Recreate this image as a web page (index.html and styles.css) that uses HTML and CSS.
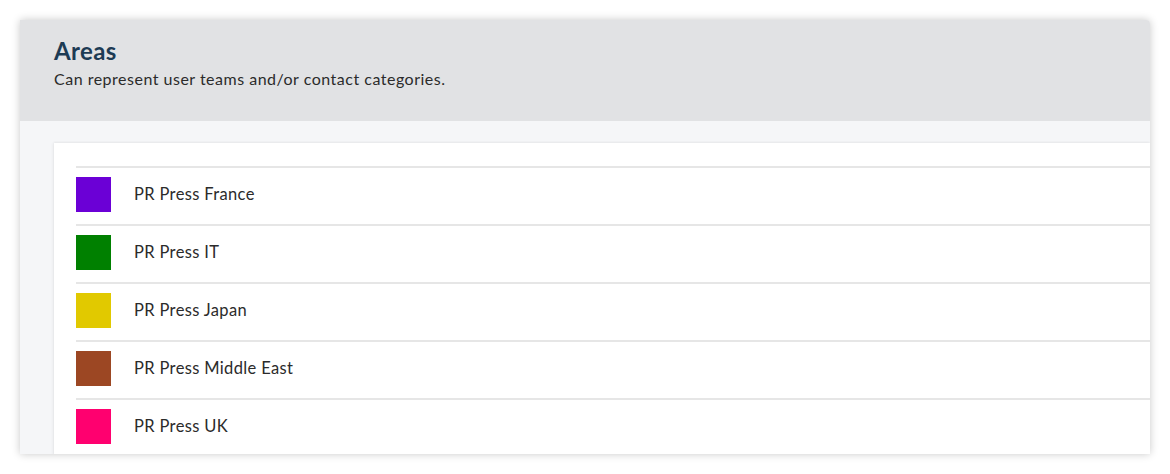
FILE: index.html
```html
<!DOCTYPE html>
<html>
<head>
<meta charset="utf-8">
<link rel="stylesheet" href="styles.css">
</head>
<body>
<div class="panel">
  <header class="panel-head">
    <h1 class="title">Areas</h1>
    <p class="subtitle">Can represent user teams and/or contact categories.</p>
  </header>
  <div class="panel-body">
    <div class="list-card">
      <ul class="area-list">
        <li class="area-row"><span class="swatch" style="background:#6b00d6"></span><span class="name">PR Press France</span></li>
        <li class="area-row"><span class="swatch" style="background:#008000"></span><span class="name">PR Press IT</span></li>
        <li class="area-row"><span class="swatch" style="background:#e1c900"></span><span class="name">PR Press Japan</span></li>
        <li class="area-row"><span class="swatch" style="background:#9c4723"></span><span class="name">PR Press Middle East</span></li>
        <li class="area-row"><span class="swatch" style="background:#ff006f"></span><span class="name">PR Press UK</span></li>
      </ul>
    </div>
  </div>
</div>
</body>
</html>
```
FILE: styles.css
```css
html, body {
  margin: 0;
  padding: 0;
  background: #ffffff;
}
body {
  padding: 20px 20px 20px 20px;
  font-family: "Lato", "Open Sans", sans-serif;
}
.panel {
  width: 1130px;
  height: 434px;
  overflow: hidden;
  border-radius: 0 4px 0 0;
  box-shadow: 0 0 8px rgba(0,0,0,0.22);
  background: #f5f6f8;
  display: flex;
  flex-direction: column;
}
.panel-head {
  background: #e1e2e4;
  height: 101px;
  box-sizing: border-box;
  padding: 16px 34px 0 34px;
  flex: none;
}
.title {
  margin: 0;
  font-size: 24px;
  font-weight: 700;
  color: #1d3b54;
  line-height: 29px;
  letter-spacing: 0.4px;
}
.subtitle {
  margin: 4px 0 0 0;
  font-size: 16px;
  color: #2b2b2b;
  line-height: 20px;
  letter-spacing: 0.5px;
}
.panel-body {
  flex: 1;
  padding: 22px 0 0 34px;
}
.list-card {
  background: #ffffff;
  height: 100%;
  box-shadow: -1px 0 3px rgba(0,0,0,0.06), 0 -1px 2px rgba(0,0,0,0.04);
  padding: 23px 0 0 22px;
  box-sizing: border-box;
}
.area-list {
  list-style: none;
  margin: 0;
  padding: 0;
}
.area-row {
  display: flex;
  align-items: center;
  border-top: 2px solid #e6e6e6;
  padding: 9px 0 12px 0;
  height: 35px;
}
.swatch {
  width: 35px;
  height: 35px;
  flex: none;
}
.name {
  margin-left: 23px;
  font-size: 16.5px;
  color: #2b2b2b;
  letter-spacing: 0.35px;
  padding-bottom: 1px;
}
```
